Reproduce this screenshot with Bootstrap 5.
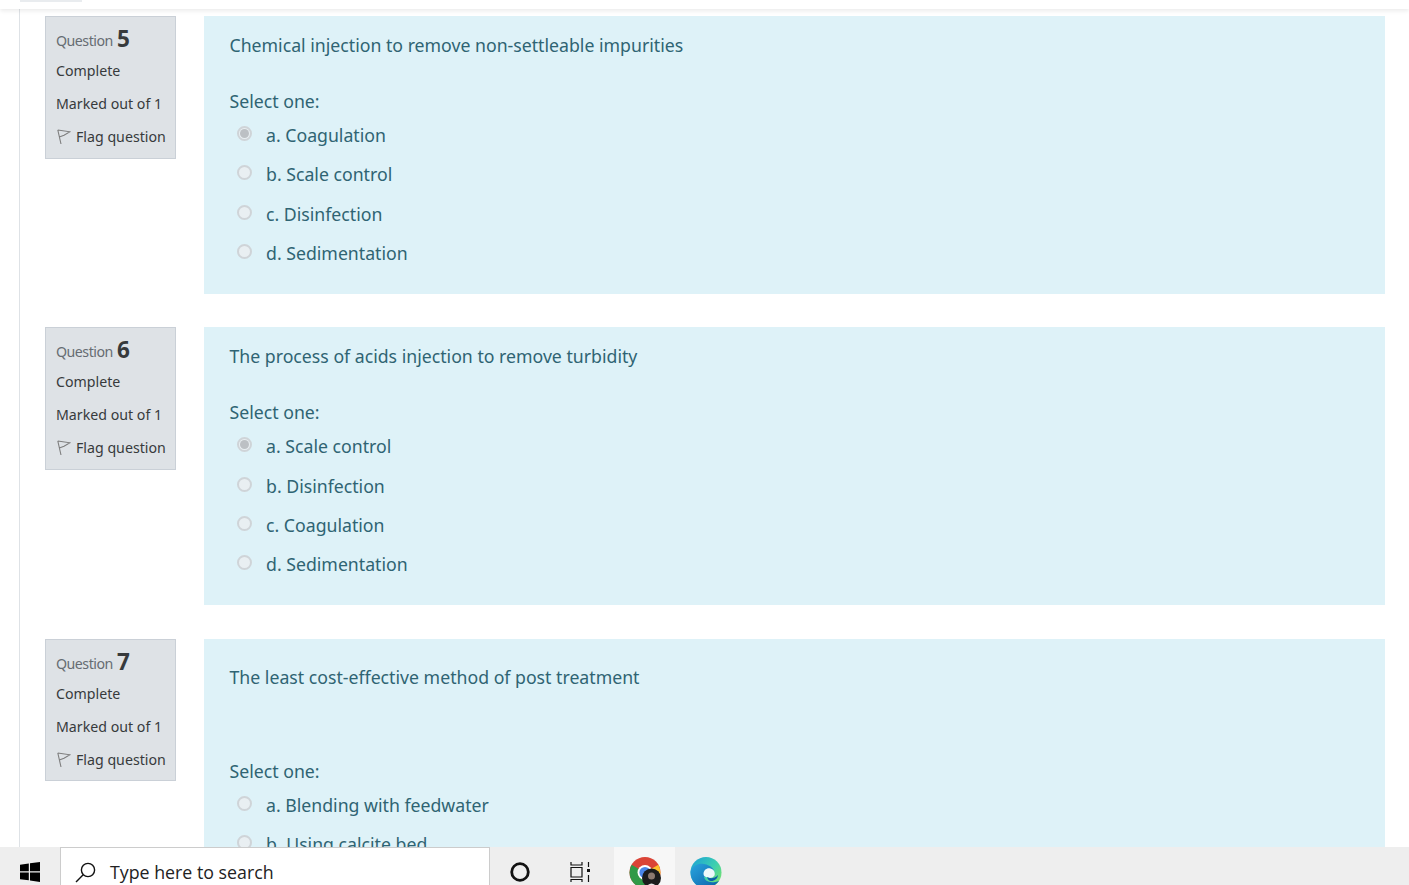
<!DOCTYPE html>
<html lang="en">
<head>
<meta charset="utf-8">
<title>Quiz review</title>
<link href="https://cdn.jsdelivr.net/npm/bootstrap@5.3.0/dist/css/bootstrap.min.css" rel="stylesheet">
<style>
html,body{height:885px;overflow:hidden;background:#fff}
body{font-family:"Noto Sans","Open Sans",sans-serif;color:#373a3c}
.top-strip{height:9px;background:#fff;box-shadow:0 2px 4px rgba(0,0,0,.08);position:relative;z-index:2;flex:none}
.top-tab{width:62px;height:2px;margin-left:20px;background:#e9ecef}
.page-area{flex:1 1 auto;min-height:0;overflow:hidden;margin-left:19px;border-left:1px solid #dee2e6;padding:7px 24px 0 25px}
.que-row{display:flex;gap:28px;margin-bottom:33.3px;align-items:flex-start}
.que-info{width:131px;flex:none;height:143px;background:#dee2e6;border:1px solid #cad0d7;padding:12px 8px 0 10px;font-size:14.2px;line-height:20px}
.que-info-short{height:142px}
.que-info div{margin-bottom:13px;white-space:nowrap}
.que-info .que-title{margin-bottom:10px;color:#666c72;letter-spacing:-.5px}
.que-num{font-size:22.5px;font-weight:700;color:#373a3c;letter-spacing:0;margin-left:1px;line-height:18px;position:relative;top:1px}
.que-flag{display:flex;align-items:center;gap:5px;padding-left:1px}
.que-flag svg{flex:none}
.que-body{flex:1 1 auto;min-width:0;background:#def2f8;color:#2f6473;padding:16px 25.500px 0;height:278px;font-size:17.7px;line-height:27px}
.que-extra{height:auto;padding-top:25px}
.que-text{height:43px;white-space:nowrap}
.que-text-tall{height:81px}
.select-one{margin-top:13px;margin-bottom:1px}
.opt-row{display:flex;align-items:center;height:39.3px;padding-left:7.500px;gap:14px}
.opt-dot{width:15px;height:15px;border-radius:50%;border:2px solid #cfd4d8;background:#e9eff2;flex:none;display:flex;align-items:center;justify-content:center;position:relative;top:-2px}
.opt-on::after{content:"";width:9px;height:9px;border-radius:50%;background:#bcc0c4}
.task-bar{height:38px;flex:none;background:#eee;display:flex;align-items:flex-start;overflow:hidden;position:relative;z-index:3}
.win-slot{width:60px;height:38px;padding:15px 0 0 20px}
.search-box{width:430px;height:38px;background:#fff;border:1px solid #ccc;border-bottom:0;display:flex;align-items:flex-start;padding:14px 0 0 14px;gap:14px;font-size:17.8px;line-height:20px;color:#222;font-family:"Open Sans",sans-serif}
.task-slot{width:61px;height:38px;display:flex;justify-content:center;padding-top:15px}
.task-first{width:60px}
.task-second{width:60px;margin-right:4px}
.task-app{padding-top:10px}
.task-active{background:#f7f7f7}
</style>
</head>
<body class="d-flex flex-column">
<div class="top-strip"><div class="top-tab"></div></div>
<main class="page-area">
  <section class="que-row">
    <div class="que-info">
      <div class="que-title">Question <span class="que-num">5</span></div>
      <div>Complete</div>
      <div>Marked out of 1</div>
      <div class="que-flag"><svg class="d-block" width="14" height="16" viewBox="0 0 14 16" fill="none" stroke="#7d7d7d" stroke-width="1.100"><path d="M.8 1 4 15M.8 1 13 2.800 7 6.200 2.300 8"/></svg>Flag question</div>
    </div>
    <div class="que-body">
      <div class="que-text">Chemical injection to remove non-settleable impurities</div>
      <div class="select-one">Select one:</div>
      <div class="opt-row"><span class="opt-dot opt-on"></span><span>a. Coagulation</span></div>
      <div class="opt-row"><span class="opt-dot"></span><span>b. Scale control</span></div>
      <div class="opt-row"><span class="opt-dot"></span><span>c. Disinfection</span></div>
      <div class="opt-row"><span class="opt-dot"></span><span>d. Sedimentation</span></div>
    </div>
  </section>
  <section class="que-row">
    <div class="que-info">
      <div class="que-title">Question <span class="que-num">6</span></div>
      <div>Complete</div>
      <div>Marked out of 1</div>
      <div class="que-flag"><svg class="d-block" width="14" height="16" viewBox="0 0 14 16" fill="none" stroke="#7d7d7d" stroke-width="1.100"><path d="M.8 1 4 15M.8 1 13 2.800 7 6.200 2.300 8"/></svg>Flag question</div>
    </div>
    <div class="que-body">
      <div class="que-text">The process of acids injection to remove turbidity</div>
      <div class="select-one">Select one:</div>
      <div class="opt-row"><span class="opt-dot opt-on"></span><span>a. Scale control</span></div>
      <div class="opt-row"><span class="opt-dot"></span><span>b. Disinfection</span></div>
      <div class="opt-row"><span class="opt-dot"></span><span>c. Coagulation</span></div>
      <div class="opt-row"><span class="opt-dot"></span><span>d. Sedimentation</span></div>
    </div>
  </section>
  <section class="que-row">
    <div class="que-info que-info-short">
      <div class="que-title">Question <span class="que-num">7</span></div>
      <div>Complete</div>
      <div>Marked out of 1</div>
      <div class="que-flag"><svg class="d-block" width="14" height="16" viewBox="0 0 14 16" fill="none" stroke="#7d7d7d" stroke-width="1.100"><path d="M.8 1 4 15M.8 1 13 2.800 7 6.200 2.300 8"/></svg>Flag question</div>
    </div>
    <div class="que-body que-extra">
      <div class="que-text que-text-tall">The least cost-effective method of post treatment</div>
      <div class="select-one">Select one:</div>
      <div class="opt-row"><span class="opt-dot"></span><span>a. Blending with feedwater</span></div>
      <div class="opt-row"><span class="opt-dot"></span><span>b. Using calcite bed</span></div>
    </div>
  </section>
</main>
<footer class="task-bar">
  <div class="win-slot"><svg class="d-block" width="20" height="20" viewBox="0 0 20 20" fill="#000"><path d="M0 2.800 8.800 1.500V9.300H0ZM10 1.300 20 0V9.300H10ZM0 10.500H8.800V18.300L0 17.200ZM10 10.500H20V20L10 18.600Z"/></svg></div>
  <div class="search-box"><svg class="d-block" width="21" height="21" viewBox="0 0 21 21" fill="none" stroke="#111" stroke-width="1.400"><circle cx="13" cy="8" r="6.600"/><path d="M8.200 12.800 1 20"/></svg><span>Type here to search</span></div>
  <div class="d-flex">
    <div class="task-slot task-first"><svg class="d-block" width="20" height="20" viewBox="0 0 20 20" fill="none" stroke="#111" stroke-width="2.800"><circle cx="10" cy="10" r="8.300"/></svg></div>
    <div class="task-slot task-second"><svg class="d-block" width="20" height="20" viewBox="0 0 20 20" fill="none" stroke="#111" stroke-width="1.200"><path d="M1 0V3H12V0M1 5.500H12V15H1ZM1 20V17.500H12V20M18.500 0V5M18.500 13V20"/><rect x="17" y="7" width="3" height="3" fill="#111" stroke="none"/></svg></div>
    <div class="task-slot task-app task-active"><svg class="d-block" width="34" height="30" viewBox="0 0 34 30">
      <circle cx="17" cy="15.500" r="15.500" fill="#db4437"/>
      <path d="M17 15.500 30.400 7.750A15.500 15.500 0 0 1 17 31Z" fill="#fbc02d"/>
      <path d="M17 15.500 17 31A15.500 15.500 0 0 1 3.600 7.750Z" fill="#309a48"/>
      <circle cx="17" cy="15.500" r="7.500" fill="#fff"/><circle cx="17" cy="15.500" r="5.600" fill="#4a86e8"/>
      <circle cx="23.500" cy="21" r="9.500" fill="#1c1c1c"/><circle cx="23.500" cy="19" r="3.500" fill="#8c7a70"/><path d="M18 30Q23.500 23 29 30Z" fill="#e8e8e8"/>
    </svg></div>
    <div class="task-slot task-app"><svg class="d-block" width="32" height="30" viewBox="0 0 32 30">
      <defs>
        <linearGradient id="edgeA" x1="0" y1="0" x2="1" y2=".8"><stop offset="0" stop-color="#1b9fd8"/><stop offset=".6" stop-color="#3ccfb0"/><stop offset="1" stop-color="#7be36a"/></linearGradient>
        <linearGradient id="edgeB" x1="0" y1="0" x2="1" y2="1"><stop offset="0" stop-color="#2aa5de"/><stop offset="1" stop-color="#0b5fa8"/></linearGradient>
      </defs>
      <circle cx="16" cy="15.500" r="15.500" fill="url(#edgeA)"/>
      <path d="M.6 14C3 8 9 6 14 7 22 8.500 25 13 24 17L14 20C15 24 20 27 29 24 25 29 19 31.500 14 31 6 30 0 23 .6 14Z" fill="url(#edgeB)"/>
      <path d="M13.500 17C13.500 13 17 10.500 20.500 11.500 24 12.500 25.500 15.500 24.500 18.500 23 21 19.500 21.500 17.500 20.500 15.500 19.500 14 20 13.500 17Z" fill="#eef8fb"/>
      <path d="M17 20C20 22 25 21.500 28 18 27.500 21.500 25 24 21 24 19 24 17.500 22 17 20Z" fill="#0b5fa8"/>
    </svg></div>
  </div>
</footer>
</body>
</html>
